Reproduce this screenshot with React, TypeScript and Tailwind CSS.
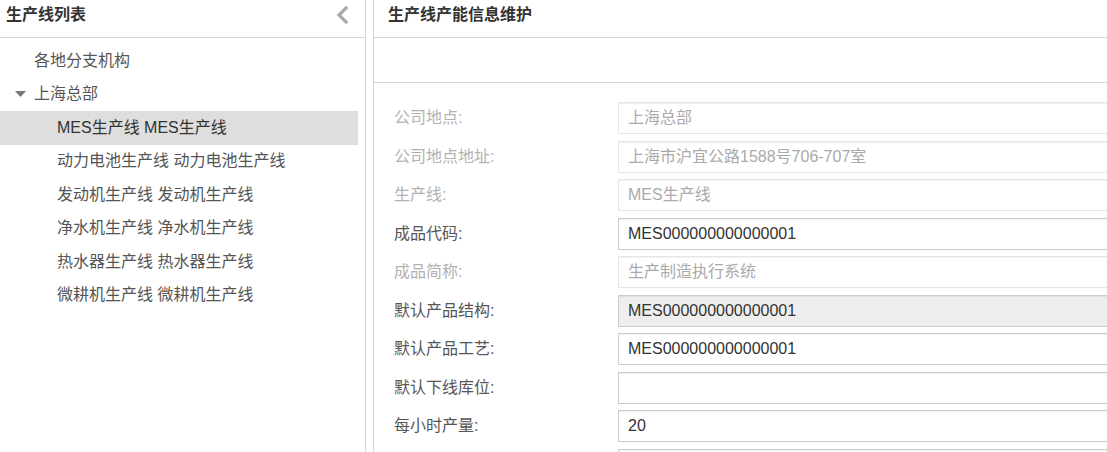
import React from "react";

const FONT = {
  fontFamily: '"Liberation Sans", "Noto Sans CJK SC", sans-serif',
};

type Field = {
  key: string;
  label: string;
  value: string;
  disabled?: boolean;
  filled?: boolean;
};

const fields: Field[] = [
  { key: "site", label: "公司地点:", value: "上海总部", disabled: true },
  { key: "addr", label: "公司地点地址:", value: "上海市沪宜公路1588号706-707室", disabled: true },
  { key: "line", label: "生产线:", value: "MES生产线", disabled: true },
  { key: "code", label: "成品代码:", value: "MES000000000000001" },
  { key: "short", label: "成品简称:", value: "生产制造执行系统", disabled: true },
  { key: "bom", label: "默认产品结构:", value: "MES000000000000001", filled: true },
  { key: "route", label: "默认产品工艺:", value: "MES000000000000001" },
  { key: "loc", label: "默认下线库位:", value: "" },
  { key: "rate", label: "每小时产量:", value: "20" },
  { key: "more", label: "", value: "" },
];

const lines = [
  "动力电池生产线 动力电池生产线",
  "发动机生产线 发动机生产线",
  "净水机生产线 净水机生产线",
  "热水器生产线 热水器生产线",
  "微耕机生产线 微耕机生产线",
];

function ChevronLeft() {
  return (
    <svg width="13" height="18" viewBox="0 0 13 18" fill="none">
      <polyline
        points="10,2 3,9 10,16"
        stroke="#a9a9a9"
        strokeWidth="3.2"
        strokeLinecap="square"
        strokeLinejoin="miter"
      />
    </svg>
  );
}

function CaretDown() {
  return (
    <svg width="11" height="6" viewBox="0 0 11 6">
      <polygon points="0,0 11,0 5.5,6" fill="#777" />
    </svg>
  );
}

function TreePanel() {
  return (
    <div className="flex h-full w-[366px] shrink-0 flex-col border-r border-[#d6d6d6] bg-white">
      <div className="flex h-[38px] shrink-0 items-start justify-between border-b border-[#d6d6d6] pl-[6px] pr-[16px]">
        <span className="pt-[6px] text-[16px] font-bold leading-[18px] text-[#333]">生产线列表</span>
        <span className="pt-[6px]">
          <ChevronLeft />
        </span>
      </div>
      <div className="flex flex-col pr-[7px] pt-[6px] text-[16px] leading-none text-[#555]">
        <div className="flex h-[33.5px] items-center pl-[34px]">各地分支机构</div>
        <div className="flex h-[33.5px] items-center pl-[15px]">
          <span className="mr-[8px] flex items-center">
            <CaretDown />
          </span>
          上海总部
        </div>
        <div className="flex h-[33.5px] items-center bg-[#dedede] pl-[57px] text-[#333]">
          MES生产线 MES生产线
        </div>
        {lines.map((t) => (
          <div key={t} className="flex h-[33.5px] items-center pl-[57px]">
            {t}
          </div>
        ))}
      </div>
    </div>
  );
}

function FormRow({ f }: { f: Field }) {
  const labelColor = f.disabled ? "text-[#b2b2b2]" : "text-[#555]";
  let box = "border-[#cccccc] bg-white text-[#333]";
  if (f.disabled) box = "border-[#e6e6e6] bg-white text-[#aaaaaa]";
  if (f.filled) box = "border-[#cccccc] bg-[#eeeeee] text-[#333]";
  return (
    <div className="flex h-[32px] items-center">
      <div className={`w-[224px] shrink-0 text-[16px] leading-none ${labelColor}`}>{f.label}</div>
      <div
        className={`flex h-[32px] w-[620px] shrink-0 items-center border pl-[9px] text-[16px] leading-none shadow-[inset_0_1px_1px_rgba(0,0,0,0.06)] ${box}`}
      >
        {f.value}
      </div>
    </div>
  );
}

function DetailPanel() {
  return (
    <div className="ml-[7px] flex h-full min-w-0 flex-1 flex-col overflow-hidden border-l border-[#d6d6d6] bg-white">
      <div className="flex h-[38px] shrink-0 items-start border-b border-[#d6d6d6] pl-[14px]">
        <span className="pt-[6px] text-[16px] font-bold leading-[18px] text-[#333]">生产线产能信息维护</span>
      </div>
      <div className="h-[45px] shrink-0 border-b border-[#d6d6d6]" />
      <div className="flex flex-col gap-[6.55px] pl-[20px] pt-[19px]">
        {fields.map((f) => (
          <FormRow key={f.key} f={f} />
        ))}
      </div>
    </div>
  );
}

export default function App() {
  return (
    <div className="flex h-[452px] w-[1107px] overflow-hidden bg-white" style={FONT}>
      <TreePanel />
      <DetailPanel />
    </div>
  );
}
